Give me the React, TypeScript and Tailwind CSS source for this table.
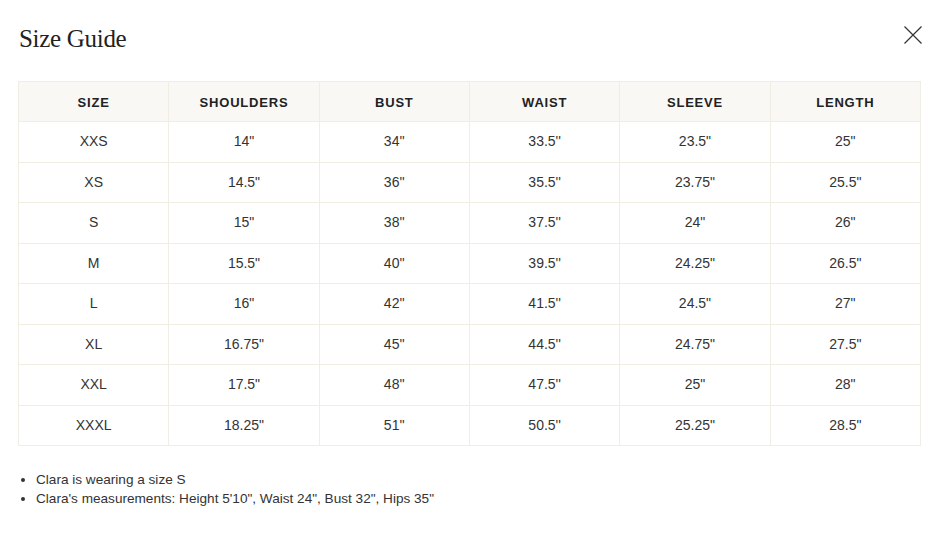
import React from 'react';

const headers = ['SIZE', 'SHOULDERS', 'BUST', 'WAIST', 'SLEEVE', 'LENGTH'];

const rows = [
  ['XXS', '14"', "34''", "33.5''", '23.5"', '25"'],
  ['XS', '14.5"', "36''", "35.5''", '23.75"', '25.5"'],
  ['S', '15"', "38''", "37.5''", '24"', '26"'],
  ['M', '15.5"', "40''", "39.5''", '24.25"', '26.5"'],
  ['L', '16"', "42''", "41.5''", '24.5"', '27"'],
  ['XL', '16.75"', "45''", "44.5''", '24.75"', '27.5"'],
  ['XXL', '17.5"', "48''", "47.5''", '25"', '28"'],
  ['XXXL', '18.25"', "51''", "50.5''", '25.25"', '28.5"'],
];

export default function App() {
  return (
    <div className="w-[936px] h-[533px] bg-white px-[18px] font-['Liberation_Sans',Arial,sans-serif] text-[#333]">
      <div className="flex items-start justify-between pt-[24px] h-[81px]">
        <h2 className="font-['Liberation_Serif',serif] text-[25px] leading-[30px] text-[#222] tracking-[-0.3px] pl-px">
          Size Guide
        </h2>
        <button className="mt-[1px] mr-[-5px] text-[#333]">
          <svg width="20" height="20" viewBox="0 0 20 20" fill="none" stroke="currentColor" strokeWidth="1.2">
            <path d="M1.5 1.5L18.5 18.5M18.5 1.5L1.5 18.5" />
          </svg>
        </button>
      </div>
      <table className="w-[903px] border-collapse table-fixed text-[14px]">
        <thead>
          <tr className="bg-[#f9f8f4]">
            {headers.map((h) => (
              <th
                key={h}
                className="h-[40px] pt-[3px] border border-[#f0eee3] font-bold tracking-[0.8px] text-[13px] text-[#222]"
              >
                {h}
              </th>
            ))}
          </tr>
        </thead>
        <tbody>
          {rows.map((r) => (
            <tr key={r[0]}>
              {r.map((c, i) => (
                <td key={i} className="h-[40.5px] border border-[#f0eee3] text-center text-[#333]">
                  {c}
                </td>
              ))}
            </tr>
          ))}
        </tbody>
      </table>
      <ul className="mt-[24px] pl-[18px] list-disc text-[13.6px] leading-[19px] text-[#333]">
        <li>Clara is wearing a size S</li>
        <li>Clara's measurements: Height 5'10", Waist 24", Bust 32", Hips 35"</li>
      </ul>
    </div>
  );
}
